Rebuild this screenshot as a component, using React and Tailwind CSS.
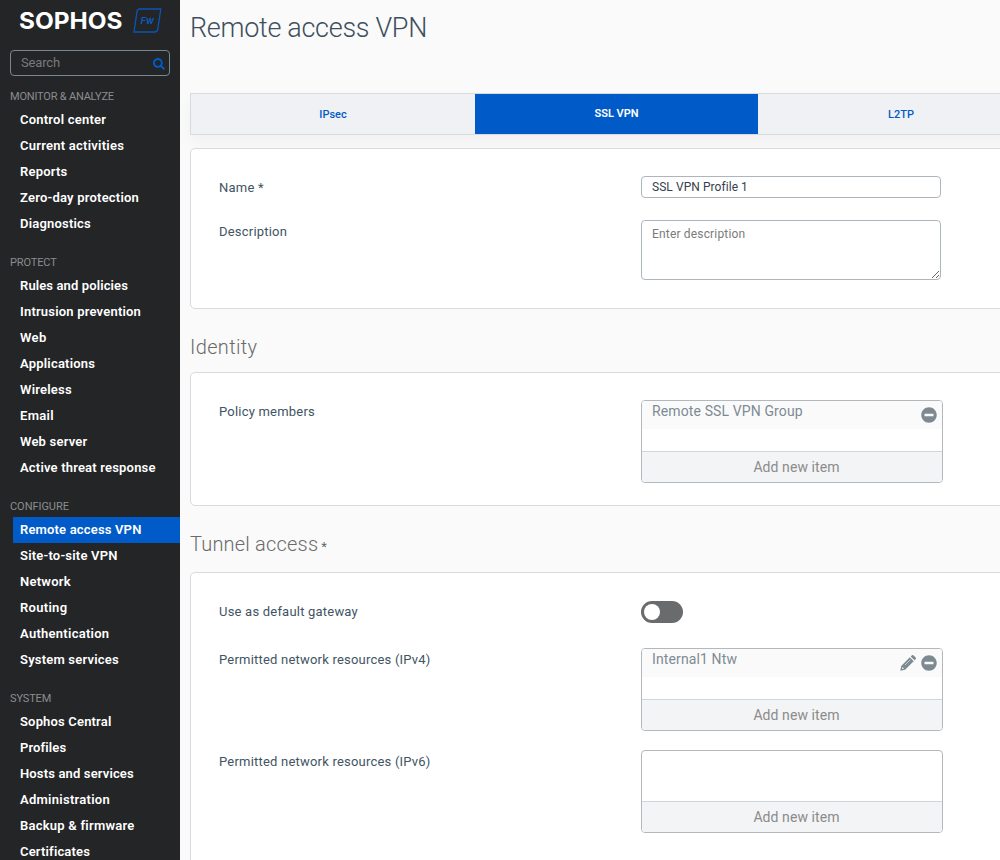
import React from "react";
import { FaSearch, FaMinusCircle } from "react-icons/fa";

const groups = [
  {
    title: "MONITOR & ANALYZE",
    titleTracking: "tracking-[-0.2px]",
    items: [
      ["Control center", "tracking-[0.22px]"],
      ["Current activities", "tracking-[0.25px]"],
      ["Reports", "tracking-[0.22px]"],
      ["Zero-day protection", "tracking-[0.22px]"],
      ["Diagnostics", "tracking-[0.2px]"],
    ],
  },
  {
    title: "PROTECT",
    titleTracking: "tracking-[-0.12px]",
    items: [
      ["Rules and policies", "tracking-[0.12px]"],
      ["Intrusion prevention", "tracking-[0.2px]"],
      ["Web", "tracking-[0.4px]"],
      ["Applications", "tracking-[0.2px]"],
      ["Wireless", "tracking-[0.22px]"],
      ["Email", "tracking-[0.3px]"],
      ["Web server", "tracking-[0.2px]"],
      ["Active threat response", "tracking-[0.19px]"],
    ],
  },
  {
    title: "CONFIGURE",
    titleTracking: "tracking-[-0.05px]",
    items: [
      ["Remote access VPN", "tracking-[0.17px]"],
      ["Site-to-site VPN", "tracking-[0.2px]"],
      ["Network", "tracking-[0.25px]"],
      ["Routing", "tracking-[0.3px]"],
      ["Authentication", "tracking-[0.27px]"],
      ["System services", "tracking-[0.2px]"],
    ],
  },
  {
    title: "SYSTEM",
    titleTracking: "tracking-[-0.15px]",
    items: [
      ["Sophos Central", "tracking-[0.17px]"],
      ["Profiles", "tracking-[0.12px]"],
      ["Hosts and services", "tracking-[0.15px]"],
      ["Administration", "tracking-[0.27px]"],
      ["Backup & firmware", "tracking-[0.24px]"],
      ["Certificates", "tracking-[0.17px]"],
    ],
  },
];

function Logo() {
  return (
    <div className="flex h-[42px] shrink-0 items-center pl-[19px]">
      <span className="w-[104px] origin-left scale-x-[1.06] whitespace-nowrap font-['Inter'] text-[23px] leading-none font-bold text-white">
        SOPHOS
      </span>
      <svg className="ml-[10px] h-[26px] w-[29px]" viewBox="0 0 29 26" fill="none">
        <path
          d="M6.8 1h21l-3 20.2a3.2 3.2 0 0 1-3.2 2.8H1L4 3.6A3 3 0 0 1 6.8 1Z"
          stroke="#0a55b5"
          strokeWidth="1.3"
        />
        <text x="14.3" y="16.3" textAnchor="middle" fill="#0a5bc8" fontFamily="Inter" fontSize="9.5" fontWeight="600" fontStyle="italic">
          Fw
        </text>
      </svg>
    </div>
  );
}

function Sidebar() {
  return (
    <aside className="flex w-[180px] shrink-0 flex-col overflow-hidden bg-[#242527]">
      <Logo />
      <div className="mx-[10px] mt-2 flex h-[26px] shrink-0 items-center justify-between rounded-[4px] border border-[#7b868e] pr-1 pl-[10px]">
        <span className="pb-px text-[13px] tracking-[-0.15px] text-[#777a7d]">Search</span>
        <FaSearch className="mt-px h-3 w-3 text-[#005bc8]" />
      </div>
      <nav className="mt-[11px] flex flex-col gap-4">
        {groups.map((g) => (
          <section key={g.title}>
            <h2 className={"h-5 pl-[10px] text-[11px] leading-[19px] text-[#8b8d8f] " + g.titleTracking}>{g.title}</h2>
            {g.items.map(([label, tracking]) => (
              <a
                key={label}
                className={
                  "ml-[13px] block h-[26px] pl-[7px] text-[13px] leading-[25px] font-semibold whitespace-nowrap text-white " +
                  tracking +
                  (label === "Remote access VPN" ? " bg-[#005bc8]" : "")
                }
              >
                {label}
              </a>
            ))}
          </section>
        ))}
      </nav>
    </aside>
  );
}

function Card({ className, children }) {
  return (
    <div className={"w-[860px] shrink-0 rounded-[5px] border border-[#d9dadb] bg-white pl-7 text-[13px] text-[#415463] " + className}>
      {children}
    </div>
  );
}

function Row({ label, className = "", children }) {
  return (
    <div className={"flex items-start " + className}>
      <span className="w-[422px] shrink-0 leading-6 tracking-[0.21px]">{label}</span>
      {children}
    </div>
  );
}

function Pencil() {
  return (
    <svg className="h-4 w-4" viewBox="0 0 16 16" fill="#7d8a92">
      <path d="M9.8 2.3 1.2 10.9 0.3 15.7 5.1 14.8 13.7 6.2ZM2.7 14 2 13.3l.3-1.3 1.7 1.7Z" fillRule="evenodd" />
      <path d="m10.7 1.5 1-1a1.4 1.4 0 0 1 2 0l1.8 1.8a1.4 1.4 0 0 1 0 2l-1 1Z" />
      <path d="m5 10 5.3-5.3" stroke="#fafafa" strokeWidth=".6" />
    </svg>
  );
}

function ItemList({ item, editable }) {
  return (
    <div className="flex h-[83px] w-[302px] flex-col overflow-hidden rounded-[4px] border border-[#b1b9bf] bg-white">
      <div className="h-[50px]">
        {item && (
          <div className="flex h-7 justify-between bg-[#fafafa] pr-[5px] pl-[10px]">
            <span className="text-sm leading-5 tracking-[0.12px] text-[#7e8b94]">{item}</span>
            <span className="flex items-center gap-[5px] pb-px">
              {editable && <Pencil />}
              <FaMinusCircle className="h-4 w-4 text-[#7d8a92]" />
            </span>
          </div>
        )}
      </div>
      <button className="h-[31px] border-t border-[#cfd5d8] bg-[#f3f4f6] pl-[9px] text-sm leading-[30px] tracking-[0.08px] text-[#8b8b8b]">
        Add new item
      </button>
    </div>
  );
}

export default function App() {
  return (
    <div className="flex h-[860px] w-full overflow-hidden bg-[#fafafa] font-['Roboto',sans-serif]">
      <Sidebar />
      <main className="flex min-w-0 flex-1 flex-col overflow-hidden pl-[10px]">
        <h1 className="h-[93px] shrink-0 pt-[10px] text-[27px] leading-9 font-light tracking-[-0.3px] text-[#3d4f5d]">
          Remote access VPN
        </h1>
        <div className="flex h-[42px] w-[854px] shrink-0 border border-[#d9dadb] bg-[#f0f1f4] text-[11px] leading-[41px] text-[#005bc8] shadow-[0_8px_16px_rgba(0,30,20,0.04)]">
          <a className="w-[284px] text-center font-medium">IPsec</a>
          <a className="w-[283px] bg-[#005bc8] text-center leading-[39px] font-semibold text-white">SSL VPN</a>
          <a className="ml-px w-[284px] text-center font-medium">L2TP</a>
        </div>

        <Card className="mt-[13px] h-[161px] pt-[27px]">
          <Row label="Name *">
            <input
              className="h-[22px] w-[300px] rounded-[4px] border border-[#aeb6bd] bg-white px-[10px] text-xs tracking-[0.06px] text-[#35414c]"
              defaultValue="SSL VPN Profile 1"
            />
          </Row>
          <Row label="Description" className="mt-5">
            <textarea
              className="h-[60px] w-[300px] rounded-[4px] border border-[#aeb6bd] bg-white px-[10px] pt-1 text-xs leading-[18px] tracking-[0.17px] placeholder:text-[#7b7b7b]"
              placeholder="Enter description"
            />
          </Row>
        </Card>

        <h2 className="mt-[23px] h-10 shrink-0 text-[20px] leading-[30px] font-light tracking-[0.35px] text-[#6a6a6a]">Identity</h2>
        <Card className="h-[134px] pt-[27px]">
          <Row label="Policy members">
            <ItemList item="Remote SSL VPN Group" />
          </Row>
        </Card>

        <h2 className="mt-[23px] h-[43px] shrink-0 text-[20px] leading-[30px] font-light tracking-[0.2px] text-[#6a6a6a]">
          Tunnel access<span className="pl-[3px] text-[13px] font-normal text-[#5b6b76]">*</span>
        </h2>
        <Card className="h-[320px] pt-[27px]">
          <Row label="Use as default gateway">
            <span className="mt-px flex h-[22px] w-[42px] items-center rounded-full bg-[#6a6b6d] pl-[3px]">
              <span className="h-4 w-4 rounded-full bg-white" />
            </span>
          </Row>
          <Row label="Permitted network resources (IPv4)" className="mt-6">
            <ItemList item="Internal1 Ntw" editable />
          </Row>
          <Row label="Permitted network resources (IPv6)" className="mt-[19px]">
            <ItemList />
          </Row>
        </Card>
      </main>
    </div>
  );
}
